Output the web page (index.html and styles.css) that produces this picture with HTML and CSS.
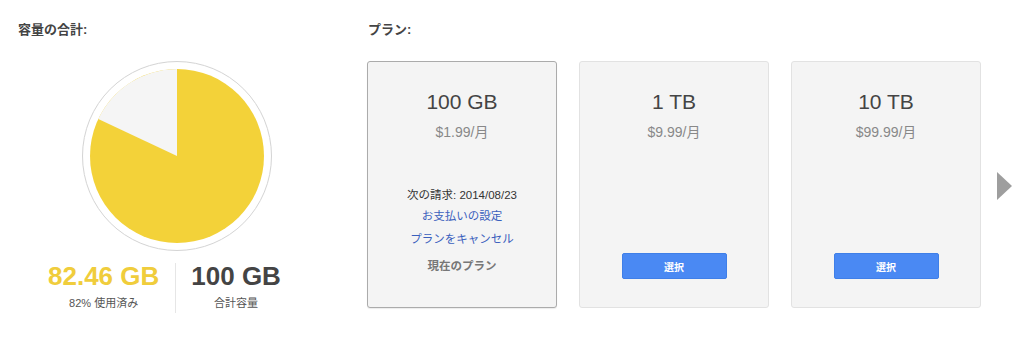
FILE: index.html
```html
<!DOCTYPE html>
<html lang="ja">
<head>
<meta charset="utf-8">
<link rel="stylesheet" href="styles.css">
</head>
<body>
<div class="page">
  <section class="storage">
    <h2 class="heading">容量の合計:</h2>
    <div class="pie">
      <svg width="192" height="192" viewBox="-96 -96 192 192">
        <circle cx="0" cy="0" r="94.5" fill="#fff" stroke="#d4d4d4" stroke-width="1"/>
        <circle cx="0" cy="0" r="87" fill="#f3d239"/>
        <path d="M0 0 L0 -87 A87 87 0 0 0 -78.7 -37.0 Z" fill="#f5f5f5"/>
      </svg>
    </div>
    <div class="stats">
      <div class="stat used">
        <div class="num">82.46 GB</div>
        <div class="label">82% 使用済み</div>
      </div>
      <div class="stat total">
        <div class="num">100 GB</div>
        <div class="label">合計容量</div>
      </div>
    </div>
  </section>
  <section class="plans">
    <h2 class="heading">プラン:</h2>
    <div class="plan-row">
      <div class="card current">
        <div class="size">100 GB</div>
        <div class="price">$1.99/月</div>
        <div class="billing">次の請求: 2014/08/23</div>
        <a class="link first">お支払いの設定</a>
        <a class="link">プランをキャンセル</a>
        <div class="current-label">現在のプラン</div>
      </div>
      <div class="card">
        <div class="size">1 TB</div>
        <div class="price">$9.99/月</div>
        <button class="select">選択</button>
      </div>
      <div class="card">
        <div class="size">10 TB</div>
        <div class="price">$99.99/月</div>
        <button class="select">選択</button>
      </div>
      <div class="next"></div>
    </div>
  </section>
</div>
</body>
</html>
```

FILE: styles.css
```css
* { box-sizing: border-box; }
html, body {
  margin: 0;
  padding: 0;
  background: #fff;
  font-family: "Liberation Sans", Arial, "Noto Sans CJK JP", sans-serif;
  color: #444;
}
.page {
  display: flex;
  padding: 20px 0 0 18px;
}
.heading {
  margin: 0;
  font-size: 13px;
  line-height: 20px;
  font-weight: bold;
  color: #444;
}
.storage {
  width: 318px;
  display: flex;
  flex-direction: column;
}
.pie {
  display: flex;
  justify-content: center;
  margin-top: 20px;
  height: 192px;
}
.pie svg { display: block; }
.stats {
  display: flex;
  margin-top: 11px;
  padding-left: 30px;
}
.stat {
  display: flex;
  flex-direction: column;
  align-items: center;
  padding-bottom: 3px;
}
.stat.used {
  padding-right: 16px;
}
.stat.total {
  padding-left: 15px;
  border-left: 1px solid #e6e6e6;
}
.num {
  font-size: 26px;
  line-height: 26px;
  font-weight: bold;
  white-space: nowrap;
}
.used .num { color: #f0cd3c; }
.total .num { color: #444; }
.label {
  margin-top: 7px;
  font-size: 11px;
  line-height: 14px;
  color: #555;
}
.plans {
  margin-left: 31px;
  display: flex;
  flex-direction: column;
}
.plans .heading { padding-left: 1px; }
.plan-row {
  display: flex;
  align-items: center;
  gap: 22px;
  margin-top: 21px;
}
.card {
  width: 190px;
  height: 247px;
  background: #f4f4f4;
  border: 1px solid #e2e2e2;
  border-radius: 3px;
  display: flex;
  flex-direction: column;
  align-items: center;
  padding: 28px 0 28px;
}
.card.current {
  border-color: #ababab;
  box-shadow: 0 1px 1px rgba(0,0,0,0.08);
}
.size {
  font-size: 21px;
  line-height: 24px;
  color: #444;
}
.price {
  margin-top: 9px;
  font-size: 14px;
  line-height: 18px;
  color: #888;
}
.billing {
  margin-top: 44px;
  font-size: 11.5px;
  line-height: 20px;
  color: #333;
}
.link {
  font-size: 11.5px;
  line-height: 22px;
  color: #3a60bd;
  cursor: pointer;
}
.link + .link { margin-top: 1px; }
.current-label {
  margin-top: 5px;
  font-size: 11.5px;
  line-height: 22px;
  font-weight: bold;
  color: #777;
}
.select {
  margin-top: auto;
  width: 105px;
  height: 26px;
  border: 1px solid #3f7fe8;
  border-radius: 2px;
  background: #4a89f3;
  color: #fff;
  font-family: "Liberation Sans", Arial, "Noto Sans CJK JP", sans-serif;
  font-size: 10px;
  font-weight: bold;
  padding: 0;
}
.next {
  width: 0;
  height: 0;
  margin-left: -6px;
  margin-top: 3px;
  border-left: 15px solid #9e9e9e;
  border-top: 14px solid transparent;
  border-bottom: 14px solid transparent;
}
```
